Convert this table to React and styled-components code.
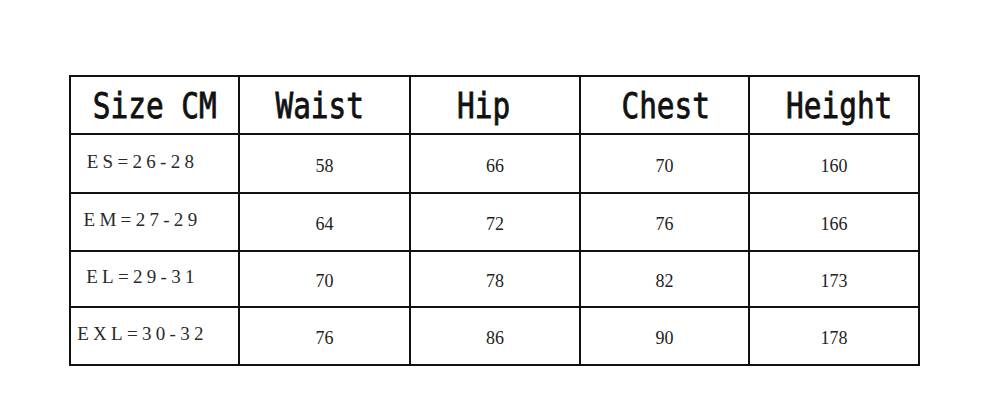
import styled, { createGlobalStyle } from 'styled-components'

const GlobalStyle = createGlobalStyle`
  body {
    margin: 0;
    background: #fff;
  }
`

const Page = styled.div`
  width: 1000px;
  height: 400px;
  padding: 75px 0 0 69px;
  box-sizing: border-box;
  background: #fff;
`

const Grid = styled.div`
  display: inline-grid;
  grid-template-columns: 167px 169px 168px 167px 168px;
  grid-template-rows: 56px 57px 56px 54px 56px;
  gap: 2px;
  padding: 2px;
  background: #111;
`

const HeadCell = styled.div`
  background: #fff;
  display: flex;
  align-items: center;
  justify-content: center;
  padding-top: 2px;
  padding-left: ${p => (p.$shift > 0 ? p.$shift * 2 : 0)}px;
  padding-right: ${p => (p.$shift < 0 ? -p.$shift * 2 : 0)}px;
`

const HeadText = styled.span`
  display: inline-block;
  font-family: "DejaVu Sans Mono", monospace;
  font-size: 35px;
  line-height: 1;
  color: #111;
  -webkit-text-stroke: 0.8px #111;
  transform: scaleX(0.84);
  white-space: pre;
`

const SizeCell = styled.div`
  background: #fff;
  display: flex;
  align-items: center;
  justify-content: center;
  padding-right: 24px;
  padding-bottom: 4px;
  font-family: "Liberation Serif", serif;
  font-size: 19px;
  letter-spacing: 4.3px;
  color: #2a2a2a;
`

const NumCell = styled.div`
  background: #fff;
  display: flex;
  align-items: center;
  justify-content: center;
  padding-top: 5px;
  font-family: "Liberation Serif", serif;
  font-size: 18px;
  color: #222;
`

const headers = [
  { label: 'Size CM', shift: 0 },
  { label: 'Waist', shift: -5 },
  { label: 'Hip', shift: -11 },
  { label: 'Chest', shift: 1 },
  { label: 'Height', shift: 5 },
]

const rows = [
  ['ES=26-28', 58, 66, 70, 160],
  ['EM=27-29', 64, 72, 76, 166],
  ['EL=29-31', 70, 78, 82, 173],
  ['EXL=30-32', 76, 86, 90, 178],
]

export default function App() {
  return (
    <Page>
      <GlobalStyle />
      <Grid>
        {headers.map(h => (
          <HeadCell key={h.label} $shift={h.shift}><HeadText>{h.label}</HeadText></HeadCell>
        ))}
        {rows.map(row => [
          <SizeCell key={row[0]}>{row[0]}</SizeCell>,
          ...row.slice(1).map((v, i) => <NumCell key={row[0] + i}>{v}</NumCell>),
        ])}
      </Grid>
    </Page>
  )
}
